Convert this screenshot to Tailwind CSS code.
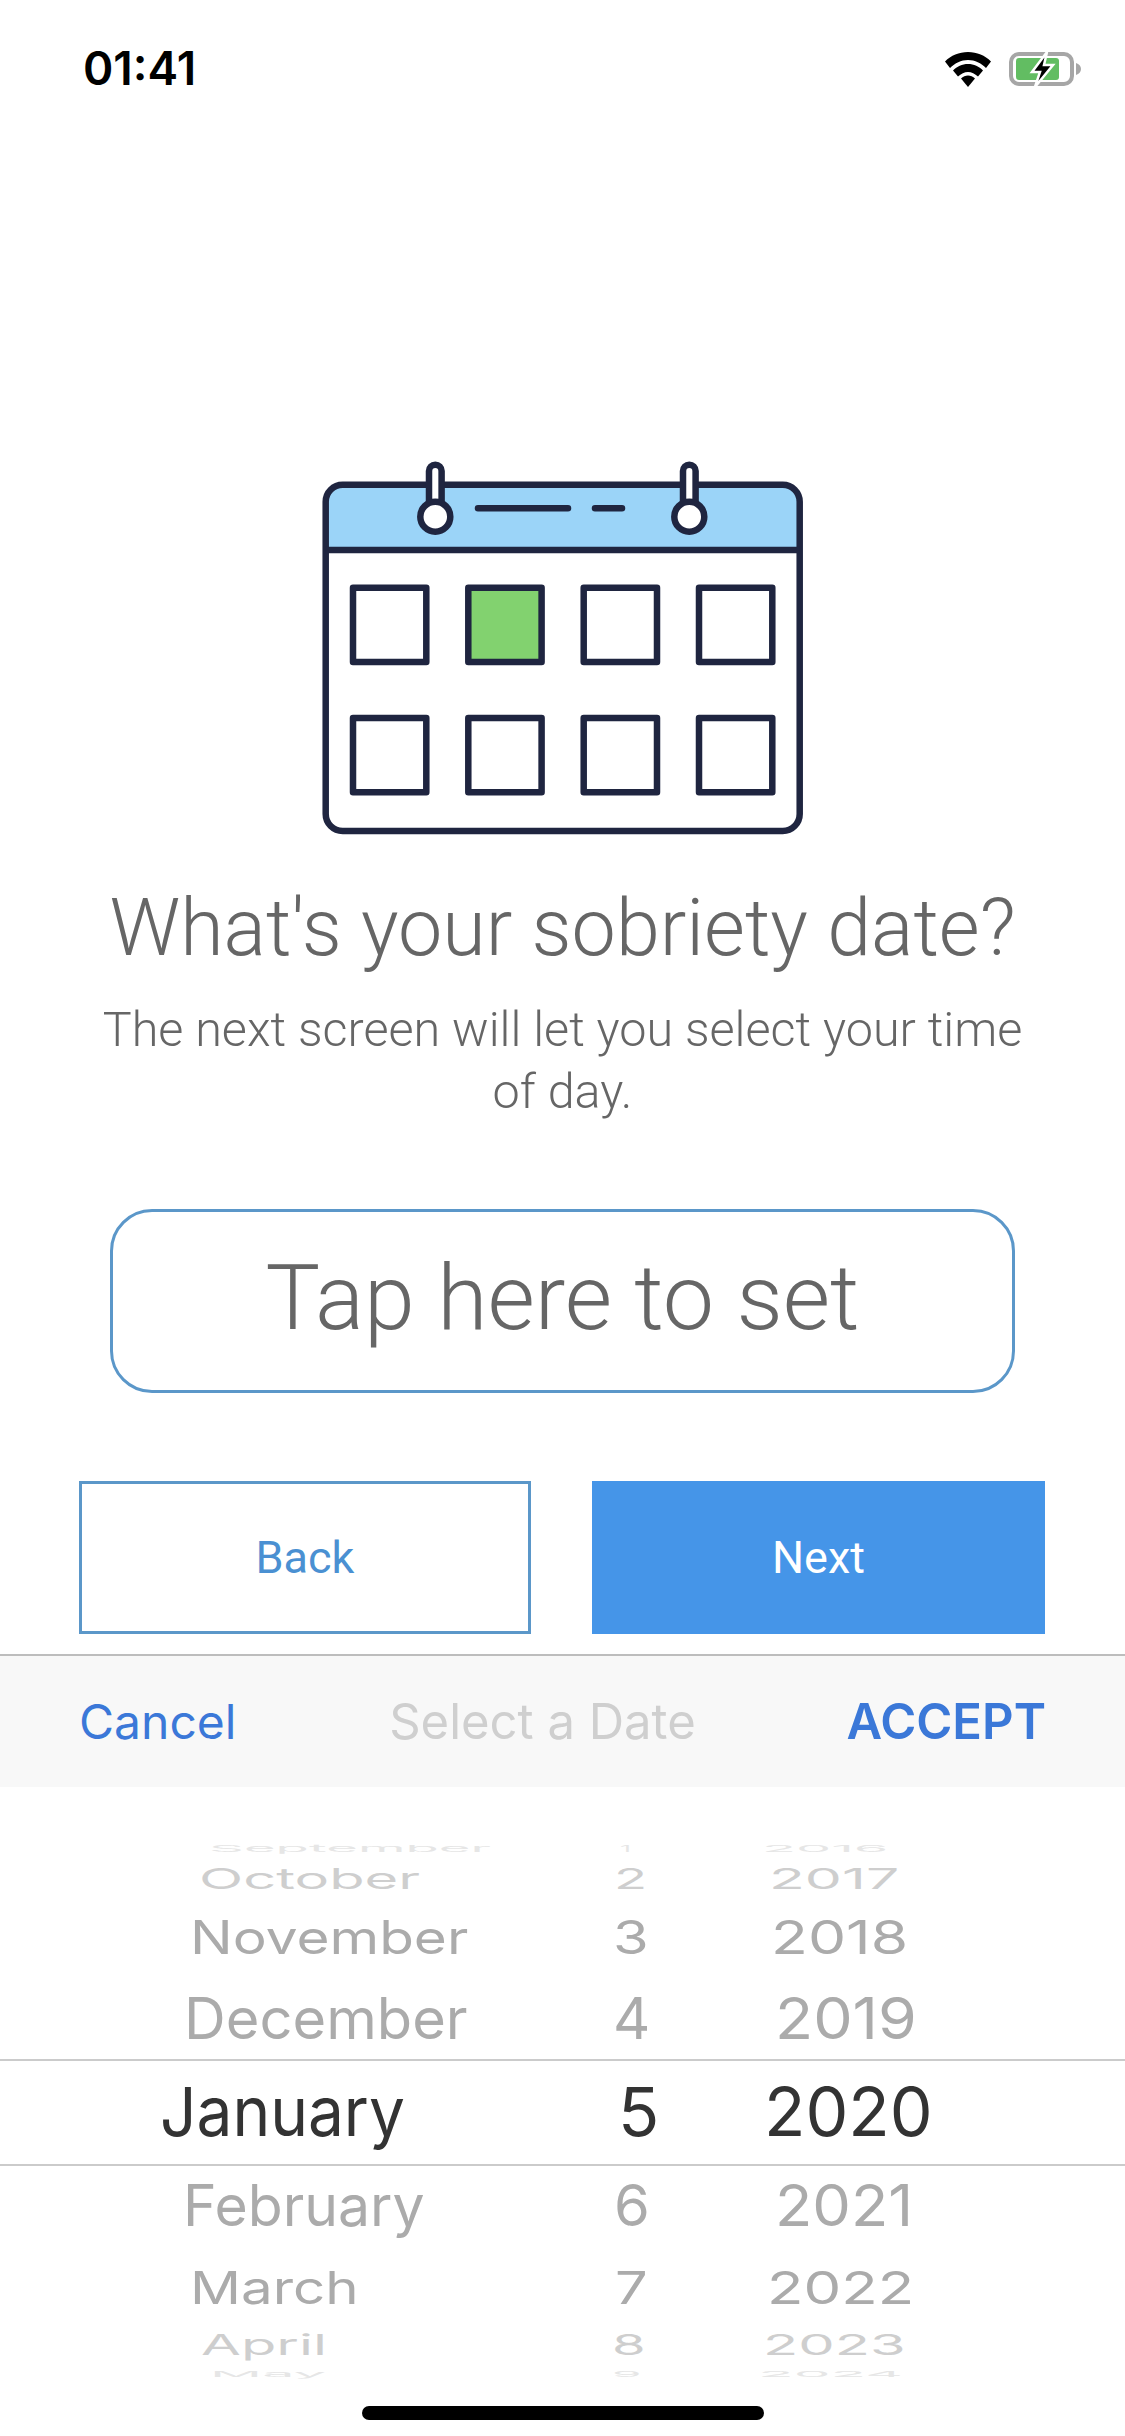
<!DOCTYPE html>
<html>
<head>
<meta charset="utf-8">
<script src="https://cdn.jsdelivr.net/npm/@tailwindcss/browser@4"></script>
</head>
<body class="bg-white">
<div class="relative w-[1125px] h-[2436px] overflow-hidden bg-white flex flex-col font-['Roboto',sans-serif]">
  <div class="h-[120px] flex justify-between items-start pl-[83px] pr-[84px] pt-[41px] relative">
    <span class="font-['Inter',sans-serif] font-semibold text-[46px] leading-[54px] text-black">01:41</span>
    <div class="flex items-start gap-[17px] pt-[11px] -mr-[42px]">
      <svg width="48" height="36" viewBox="0 0 48 36"><path d="M24 0C15 0 7 3.500 1 9.500L6 16C11 11 17 8 24 8S37 11 42 16L47 9.500C41 3.500 33 0 24 0Z" fill="#000"/><path d="M24 12C18 12 13 14.500 9 18.500L14 24.500C17 21.800 20.500 20 24 20S31 21.800 34 24.500L39 18.500C35 14.500 30 12 24 12Z" fill="#000"/><path d="M24 23.500C21.500 23.500 19 24.500 17 26.500L24 35L31 26.500C29 24.500 26.500 23.500 24 23.500Z" fill="#000"/></svg>
      <svg width="74" height="36" viewBox="0 0 74 36"><rect x="2" y="2" width="61" height="30" rx="8" fill="none" stroke="#a6a6a6" stroke-width="4"/><path d="M67 11C70 12 72 14 72 17S70 22 67 23Z" fill="#a6a6a6"/><rect x="7" y="6" width="43" height="22" rx="3" fill="#62bd62"/><path d="M38 0L23 20H31L26 35L44 13H35Z" fill="#000" stroke="#fff" stroke-width="2.500"/></svg>
    </div>
  </div>
  <svg class="mt-[320px] ml-[300px] block shrink-0" width="520" height="420" viewBox="0 0 520 420">
    <path d="M25.700 110V62A17 17 0 0 1 42.700 44.700H482.700A17 17 0 0 1 499.700 62V110Z" fill="#9bd4f8"/>
    <rect x="25.700" y="44.700" width="474" height="346.300" rx="17" fill="none" stroke="#1f2540" stroke-width="6.500"/>
    <path d="M25.700 110H499.700" stroke="#1f2540" stroke-width="6.500"/>
    <g stroke="#1f2540" stroke-width="6.500" fill="#fff">
      <path d="M129 63V31A6.300 6.300 0 0 1 141.600 31V63Z"/>
      <circle cx="135.300" cy="76.700" r="15"/>
      <path d="M383 63V31A6.300 6.300 0 0 1 395.600 31V63Z"/>
      <circle cx="389.300" cy="76.700" r="15"/>
      <rect x="53" y="147.700" width="73.300" height="74.300" stroke-linejoin="round"/>
      <rect x="168.300" y="147.700" width="73.300" height="74.300" fill="#82d26f" stroke-linejoin="round"/>
      <rect x="283.700" y="147.700" width="73.300" height="74.300" stroke-linejoin="round"/>
      <rect x="399" y="147.700" width="73.300" height="74.300" stroke-linejoin="round"/>
      <rect x="53" y="278" width="73.300" height="74.300" stroke-linejoin="round"/>
      <rect x="168.300" y="278" width="73.300" height="74.300" stroke-linejoin="round"/>
      <rect x="283.700" y="278" width="73.300" height="74.300" stroke-linejoin="round"/>
      <rect x="399" y="278" width="73.300" height="74.300" stroke-linejoin="round"/>
    </g>
    <path d="M178 68.300H268M295 68.300H322" stroke="#1f2540" stroke-width="6.500" stroke-linecap="round"/>
  </svg>
  <h1 class="mt-[23px] text-center font-light text-[79px] leading-[90px] text-[#666]">What's your sobriety date?</h1>
  <p class="mt-[26px] mx-auto w-[930px] text-center font-light text-[48.5px] leading-[62px] text-[#666]">The next screen will let you select your time of day.</p>
  <div class="mt-[86px] ml-[110px] w-[905px] h-[184px] pb-[6px] rounded-[42px] border-[3px] border-[#5b97c9] flex items-center justify-center font-light text-[91.5px] text-[#666]">Tap here to set</div>
  <div class="mt-[88px] pl-[79px] flex gap-[61px]">
    <div class="w-[452px] h-[153px] border-[3px] border-[#5b97c9] flex items-center justify-center text-[45px] text-[#4a90d2]">Back</div>
    <div class="w-[453px] h-[153px] bg-[#4595e8] flex items-center justify-center text-[45px] text-white">Next</div>
  </div>
  <div class="mt-[20px] h-[133px] border-t-2 border-[#bdbdbd] bg-[#f8f8f8] pl-[79px] pr-[79px] flex items-center justify-between font-['Inter',sans-serif] text-[48px] leading-none">
    <span class="text-[#3b78d8]">Cancel</span>
    <span class="text-[#cfcfcf] ml-[2px] text-[49px]">Select a Date</span>
    <span class="text-[#3b78d8] font-semibold text-[49px]">ACCEPT</span>
  </div>
  <div class="pt-[49px] flex flex-col font-['Inter',sans-serif] text-[68px] leading-none">
    <div class="h-[26px] grid grid-cols-[600px_150px_1fr] grid-rows-[minmax(0,1fr)] items-center text-[#e6e6e6]">
      <div class="pl-[209px]"><span class="inline-block origin-left scale-x-[0.8] scale-y-[0.14]">September</span></div>
      <div class="pl-[20px]"><span class="inline-block origin-left scale-x-[0.4] scale-y-[0.14]">1</span></div>
      <div class="pl-[12px]"><span class="inline-block origin-left scale-x-[0.82] scale-y-[0.14]">2016</span></div>
    </div>
    <div class="h-[33px] grid grid-cols-[600px_150px_1fr] grid-rows-[minmax(0,1fr)] items-center text-[#cecece]">
      <div class="pl-[199px]"><span class="inline-block origin-left scale-x-[0.85] scale-y-[0.42]">October</span></div>
      <div class="pl-[14px]"><span class="inline-block origin-left scale-x-[0.8] scale-y-[0.42]">2</span></div>
      <div class="pl-[19px]"><span class="inline-block origin-left scale-x-[0.865] scale-y-[0.42]">2017</span></div>
    </div>
    <div class="h-[84px] grid grid-cols-[600px_150px_1fr] grid-rows-[minmax(0,1fr)] items-center text-[#ababab]">
      <div class="pl-[190px]"><span class="inline-block origin-left scale-x-[0.834] scale-y-[0.68]">November</span></div>
      <div class="pl-[13px]"><span class="inline-block origin-left scale-x-[0.85] scale-y-[0.68]">3</span></div>
      <div class="pl-[21px]"><span class="inline-block origin-left scale-x-[0.89] scale-y-[0.68]">2018</span></div>
    </div>
    <div class="h-[78px] grid grid-cols-[600px_150px_1fr] grid-rows-[minmax(0,1fr)] items-center text-[#ababab]">
      <div class="pl-[184px]"><span class="inline-block origin-left scale-x-[0.85] scale-y-[0.84]">December</span></div>
      <div class="pl-[13px]"><span class="inline-block origin-left scale-x-[0.85] scale-y-[0.84]">4</span></div>
      <div class="pl-[25px]"><span class="inline-block origin-left scale-x-[0.92] scale-y-[0.84]">2019</span></div>
    </div>
    <div class="mt-[2px] h-[107px] pb-[3px] border-y-2 border-[#cbcbcb] grid grid-cols-[600px_150px_1fr] grid-rows-[minmax(0,1fr)] items-center text-[#333]">
      <div class="pl-[160px]"><span class="inline-block origin-left scale-x-[0.94]">January</span></div>
      <div class="pl-[18px]"><span class="inline-block origin-left">5</span></div>
      <div class="pl-[14px]"><span class="inline-block origin-left">2020</span></div>
    </div>
    <div class="-mt-[3px] h-[84px] grid grid-cols-[600px_150px_1fr] grid-rows-[minmax(0,1fr)] items-center text-[#ababab]">
      <div class="pl-[183px]"><span class="inline-block origin-left scale-x-[0.84] scale-y-[0.84]">February</span></div>
      <div class="pl-[14px]"><span class="inline-block origin-left scale-x-[0.85] scale-y-[0.84]">6</span></div>
      <div class="pl-[25px]"><span class="inline-block origin-left scale-x-[0.9] scale-y-[0.84]">2021</span></div>
    </div>
    <div class="h-[80px] grid grid-cols-[600px_150px_1fr] grid-rows-[minmax(0,1fr)] items-center text-[#ababab]">
      <div class="pl-[190px]"><span class="inline-block origin-left scale-x-[0.83] scale-y-[0.66]">March</span></div>
      <div class="pl-[15px]"><span class="inline-block origin-left scale-x-[0.85] scale-y-[0.66]">7</span></div>
      <div class="pl-[17px]"><span class="inline-block origin-left scale-x-[0.88] scale-y-[0.66]">2022</span></div>
    </div>
    <div class="h-[36px] grid grid-cols-[600px_150px_1fr] grid-rows-[minmax(0,1fr)] items-center text-[#cecece]">
      <div class="pl-[201px]"><span class="inline-block origin-left scale-x-[0.85] scale-y-[0.42]">April</span></div>
      <div class="pl-[12px]"><span class="inline-block origin-left scale-x-[0.8] scale-y-[0.42]">8</span></div>
      <div class="pl-[13px]"><span class="inline-block origin-left scale-x-[0.85] scale-y-[0.42]">2023</span></div>
    </div>
    <div class="h-[22px] grid grid-cols-[600px_150px_1fr] grid-rows-[minmax(0,1fr)] items-center text-[#e6e6e6]">
      <div class="pl-[210px]"><span class="inline-block origin-left scale-x-[0.85] scale-y-[0.12]">May</span></div>
      <div class="pl-[12px]"><span class="inline-block origin-left scale-x-[0.7] scale-y-[0.12]">9</span></div>
      <div class="pl-[8px]"><span class="inline-block origin-left scale-x-[0.86] scale-y-[0.12]">2024</span></div>
    </div>
  </div>
  <div class="absolute left-[362px] top-[2406px] w-[402px] h-[14px] rounded-full bg-black"></div>
</div>
</body>
</html>
